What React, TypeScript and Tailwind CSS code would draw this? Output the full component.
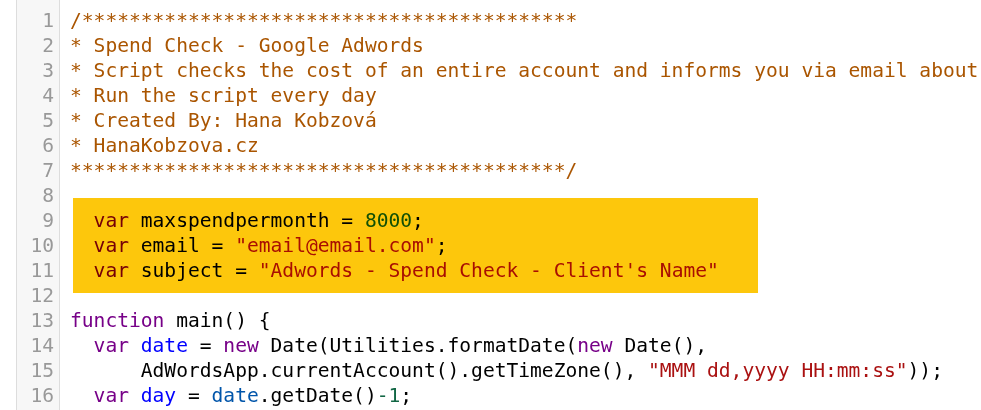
import React from "react";

type Tok = [string, string?];

const C = {
  comment: "text-[#aa5500]",
  kw: "text-[#770088]",
  def: "text-[#0000ff]",
  v2: "text-[#0055aa]",
  num: "text-[#116644]",
  str: "text-[#aa1111]",
};

const lines: Tok[][] = [
  [["/" + "*".repeat(42), C.comment]],
  [["* Spend Check - Google Adwords", C.comment]],
  [["* Script checks the cost of an entire account and informs you via email about", C.comment]],
  [["* Run the script every day", C.comment]],
  [["* Created By: Hana Kobzová", C.comment]],
  [["* HanaKobzova.cz", C.comment]],
  [["*".repeat(42) + "/", C.comment]],
  [],
  [["  "], ["var", C.kw], [" maxspendpermonth = "], ["8000", C.num], [";"]],
  [["  "], ["var", C.kw], [" email = "], ['"email@email.com"', C.str], [";"]],
  [["  "], ["var", C.kw], [" subject = "], ['"Adwords - Spend Check - Client\'s Name"', C.str]],
  [],
  [["function", C.kw], [" main() {"]],
  [["  "], ["var", C.kw], [" "], ["date", C.def], [" = "], ["new", C.kw], [" Date(Utilities.formatDate("], ["new", C.kw], [" Date(),"]],
  [["      AdWordsApp.currentAccount().getTimeZone(), "], ['"MMM dd,yyyy HH:mm:ss"', C.str], ["));"]],
  [["  "], ["var", C.kw], [" "], ["day", C.def], [" = "], ["date", C.v2], [".getDate()"], ["-1", C.num], [";"]],
];

function Line({ toks }: { toks: Tok[] }) {
  return (
    <div className="h-[25px] whitespace-pre">
      {toks.map(([t, cls], i) => (
        <span key={i} className={cls}>
          {t}
        </span>
      ))}
    </div>
  );
}

export default function App() {
  return (
    <div
      className="w-[981px] h-[410px] overflow-hidden bg-white flex pl-[16px] text-[19.6px] leading-[25px] text-black"
      style={{ fontFamily: '"DejaVu Sans Mono", monospace' }}
    >
      {/* gutter */}
      <div className="w-[44px] shrink-0 bg-[#f7f7f7] border-l border-r border-[#dddddd] pt-[8px] pr-[5px] text-right text-[#999999]">
        {lines.map((_, i) => (
          <div key={i} className="h-[25px]">
            {i + 1}
          </div>
        ))}
      </div>

      {/* code */}
      <div className="pl-[10px] pt-[8px] flex-1">
        {lines.slice(0, 8).map((l, i) => (
          <Line key={i} toks={l} />
        ))}
        <div className="relative">
          {lines.slice(8, 11).map((l, i) => (
            <Line key={i} toks={l} />
          ))}
          <div className="absolute left-[3px] -top-[10px] -bottom-[10px] w-[685px] bg-[#fdc70c] mix-blend-multiply pointer-events-none" />
        </div>
        {lines.slice(11).map((l, i) => (
          <Line key={i} toks={l} />
        ))}
      </div>
    </div>
  );
}
